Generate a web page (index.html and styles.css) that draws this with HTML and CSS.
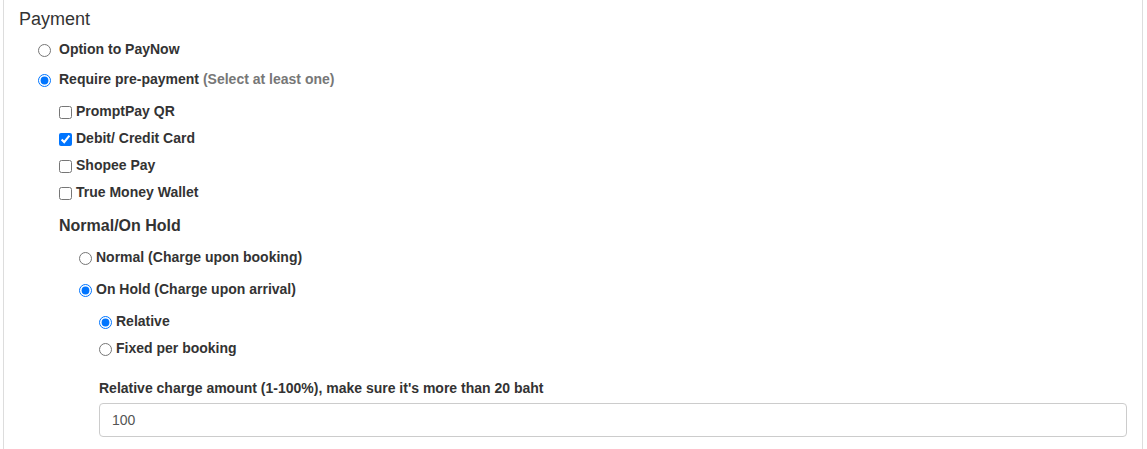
FILE: index.html
```html
<!DOCTYPE html>
<html>
<head>
<meta charset="utf-8">
<link rel="stylesheet" href="styles.css">
</head>
<body>
<div class="panel">
  <div class="title">Payment</div>
  <div class="level1">
    <label class="row r-opt"><input type="radio" name="pay"><span>Option to PayNow</span></label>
    <label class="row r-req"><input type="radio" name="pay" checked><span>Require pre-payment <span class="muted">(Select at least one)</span></span></label>
    <div class="level2">
      <label class="row c-first"><input type="checkbox"><span>PromptPay QR</span></label>
      <label class="row c-next"><input type="checkbox" checked><span>Debit/ Credit Card</span></label>
      <label class="row c-next"><input type="checkbox"><span>Shopee Pay</span></label>
      <label class="row c-next"><input type="checkbox"><span>True Money Wallet</span></label>
      <div class="subhead">Normal/On Hold</div>
      <div class="level3">
        <label class="row h-normal"><input type="radio" name="hold"><span>Normal (Charge upon booking)</span></label>
        <label class="row h-hold"><input type="radio" name="hold" checked><span>On Hold (Charge upon arrival)</span></label>
        <div class="level4">
          <label class="row k-rel"><input type="radio" name="kind" checked><span>Relative</span></label>
          <label class="row c-next"><input type="radio" name="kind"><span>Fixed per booking</span></label>
          <div class="field-label">Relative charge amount (1-100%), make sure it's more than 20 baht</div>
          <input class="text-input" type="text" value="100">
        </div>
      </div>
    </div>
  </div>
</div>
</body>
</html>
```
FILE: styles.css
```css
html, body {
  margin: 0;
  padding: 0;
  background: #fff;
}
body {
  font-family: "Liberation Sans", Arial, sans-serif;
  font-size: 14px;
  color: #333;
}
.panel {
  margin-left: 3px;
  width: 1140px;
  height: 449px;
  border-left: 1px solid #ddd;
  border-right: 1px solid #ddd;
  padding: 9px 0 0 15px;
  box-sizing: border-box;
}
.title {
  font-size: 18px;
  line-height: 20px;
  height: 20px;
}
.level1 {
  padding-left: 19px;
}
.row {
  display: flex;
  align-items: flex-start;
  height: 20px;
  line-height: 20px;
  font-weight: bold;
}
.row input {
  margin: 5px 0 0 0;
  width: 13px;
  height: 13px;
  flex: none;
}
.level1 > .row span {
  margin-left: 8px;
}
.level1 > .row span .muted,
.row span span {
  margin-left: 0;
}
.level2 .row span {
  margin-left: 4px;
}
.muted {
  color: #777;
}
.r-opt { margin-top: 10px; }
.r-req { margin-top: 10px; }
.level2 {
  padding-left: 21px;
}
.c-first { margin-top: 12px; }
.c-next { margin-top: 7px; }
.subhead {
  margin-top: 14px;
  font-size: 16px;
  font-weight: bold;
  line-height: 20px;
  height: 20px;
}
.level3 {
  padding-left: 20px;
}
.h-normal { margin-top: 11px; }
.h-hold { margin-top: 12px; }
.level4 {
  padding-left: 20px;
}
.k-rel { margin-top: 12px; }
.field-label {
  margin-top: 20px;
  font-weight: bold;
  line-height: 20px;
  height: 20px;
}
.text-input {
  display: block;
  margin-top: 5px;
  box-sizing: border-box;
  width: 1028px;
  height: 34px;
  padding: 6px 12px;
  border: 1px solid #ccc;
  border-radius: 4px;
  font-family: "Liberation Sans", Arial, sans-serif;
  font-size: 14px;
  color: #555;
  background: #fff;
  outline: none;
}
```
